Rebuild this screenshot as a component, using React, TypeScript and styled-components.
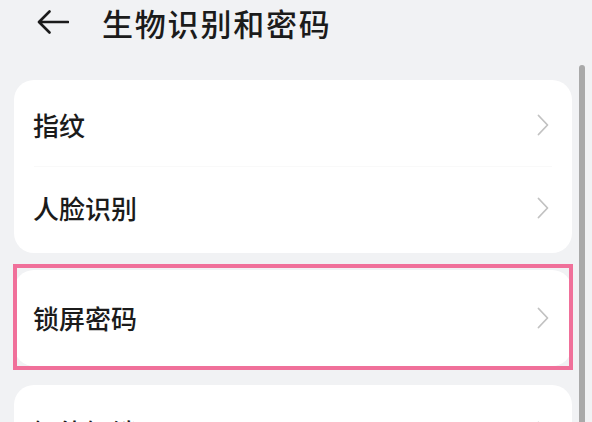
import styled, { createGlobalStyle } from "styled-components";

const GlobalStyle = createGlobalStyle`
  html, body {
    margin: 0;
    padding: 0;
    background: #f1f2f4;
    overflow: hidden;
  }
  body {
    font-family: "Noto Sans CJK SC", "Noto Sans", sans-serif;
    color: #1b1b1b;
  }
`;

export default function App() {
  return (
    <>
      <GlobalStyle />
      <Screen>
        <Main>
          <Header>
            <BackArrow />
            <Title>生物识别和密码</Title>
          </Header>

          <Card>
            <Row label="指纹" />
            <Divider />
            <Row label="人脸识别" />
          </Card>

          <Card gap={17} highlighted>
            <Row label="锁屏密码" height={96} />
          </Card>

          <Card gap={19}>
            <Row label="智能解锁" height={85} />
          </Card>
        </Main>
        <Scrollbar />
      </Screen>
    </>
  );
}

function Row({ label, height = 82 }: { label: string; height?: number }) {
  return (
    <RowWrapper rowHeight={height}>
      <RowLabel>{label}</RowLabel>
      <Chevron />
    </RowWrapper>
  );
}

function BackArrow() {
  return (
    <ArrowSvg viewBox="0 0 32 24" fill="none">
      <path
        d="M31 12H2.5M12.5 1.5L2 12l10.5 10.5"
        stroke="#1b1b1b"
        strokeWidth="2.6"
        strokeLinecap="round"
        strokeLinejoin="round"
      />
    </ArrowSvg>
  );
}

function Chevron() {
  return (
    <ChevronSvg viewBox="0 0 12 22" fill="none">
      <path
        d="M1.5 1.5L10.5 11L1.5 20.5"
        stroke="#c2c2c2"
        strokeWidth="1.8"
        strokeLinecap="round"
        strokeLinejoin="round"
      />
    </ChevronSvg>
  );
}

const Screen = styled.div`
  display: flex;
  height: 422px;
  width: 592px;
  overflow: hidden;
`;

const Main = styled.div`
  width: 560px;
  padding-left: 13px;
  display: flex;
  flex-direction: column;
  flex-shrink: 0;
`;

const Header = styled.div`
  height: 44px;
  flex-shrink: 0;
  display: flex;
  align-items: center;
  padding-left: 24px;
  gap: 33px;
`;

const ArrowSvg = styled.svg`
  width: 32px;
  height: 24px;
  flex-shrink: 0;
`;

const Title = styled.h1`
  margin: 0;
  font-size: 31px;
  font-weight: 500;
  letter-spacing: 1.8px;
  line-height: 1;
  color: #1b1b1b;
`;

const Card = styled.div<{ gap?: number; highlighted?: boolean }>`
  position: relative;
  margin-top: ${(p) => p.gap ?? 36}px;
  margin-left: 1px;
  margin-right: 1px;
  background: #ffffff;
  border-radius: 20px;
  padding: 4px 0;
  flex-shrink: 0;

  ${(p) =>
    p.highlighted &&
    `
    padding: 0;
    &::after {
      content: "";
      position: absolute;
      top: -6px;
      bottom: -4px;
      left: -1px;
      right: -1px;
      border: 4px solid #f0709a;
      pointer-events: none;
    }
  `}
`;

const RowWrapper = styled.div<{ rowHeight: number }>`
  height: ${(p) => p.rowHeight}px;
  display: flex;
  align-items: center;
  justify-content: space-between;
  padding: 0 23px 0 19px;
`;

const RowLabel = styled.span`
  font-size: 26px;
  font-weight: 500;
  line-height: 1;
`;

const ChevronSvg = styled.svg`
  width: 12px;
  height: 22px;
  flex-shrink: 0;
`;

const Divider = styled.div`
  height: 1px;
  margin: 0 20px;
  background: #f9f9f9;
`;

const Scrollbar = styled.div`
  width: 6px;
  margin-top: 65px;
  margin-left: 6px;
  height: 400px;
  flex-shrink: 0;
  border-radius: 3px 3px 0 0;
  background: #a9a9a9;
`;
